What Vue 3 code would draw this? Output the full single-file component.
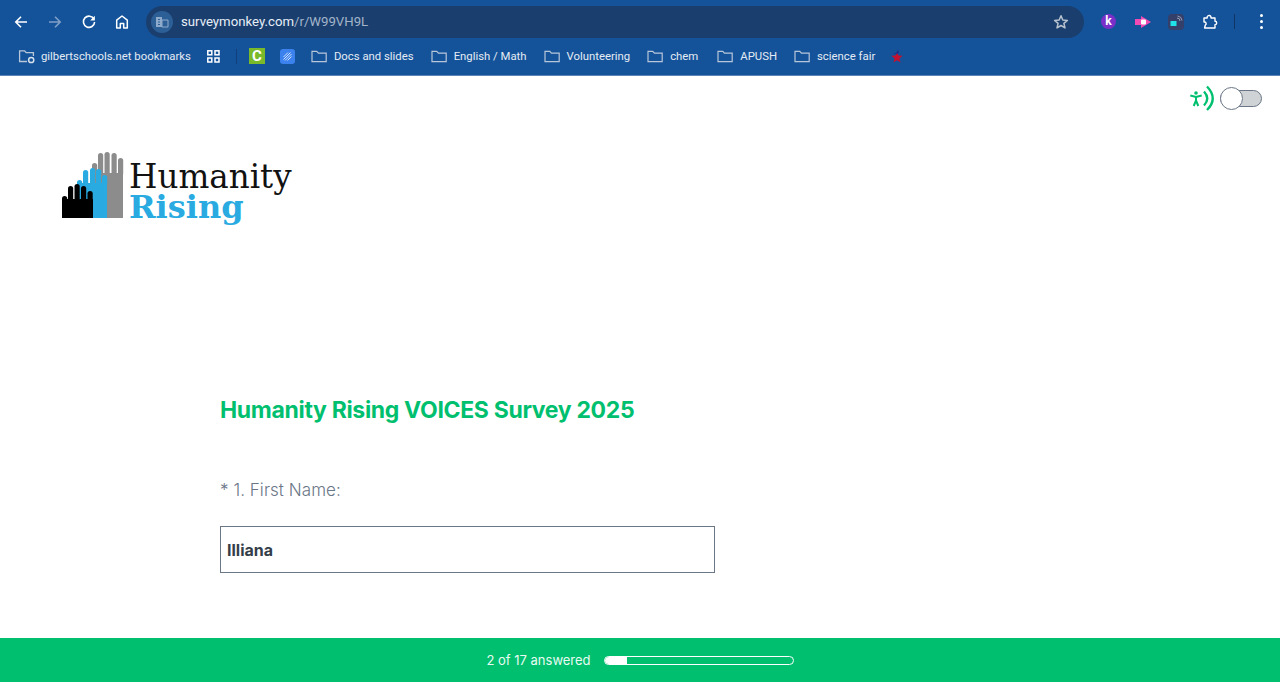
<script setup>
const folders = [
  { label: 'Docs and slides', gap: 17 },
  { label: 'English / Math', gap: 17 },
  { label: 'Volunteering', gap: 17 },
  { label: 'chem', gap: 19 },
  { label: 'APUSH', gap: 17 },
  { label: 'science fair', gap: 15 }
]
const fingers = [
  { color: '#8c8c8c', top: 22, body: [30, 31], items: [[30, 12], [36, 2], [42.5, 1], [49.5, 2], [56, 7]] },
  { color: '#29abe2', top: 32, body: [15, 30], items: [[15, 29], [21, 19], [28, 17], [34, 18], [40, 24]] },
  { color: '#000', top: 48, body: [0, 31], items: [[0, 45], [6, 35], [12.5, 33], [19, 35], [25.5, 40]] }
]
</script>

<template>
  <div class="page">
    <header class="chrome">
      <div class="toolbar">
        <svg class="nav first" width="16" height="16" viewBox="0 0 16 16"><path d="M14 8H3M8 2.8 2.8 8 8 13.2" fill="none" stroke="#fff" stroke-width="1.6"/></svg>
        <svg class="nav dim" width="16" height="16" viewBox="0 0 16 16"><path d="M2 8h11M8 2.8 13.2 8 8 13.2" fill="none" stroke="#7f9fc6" stroke-width="1.6"/></svg>
        <svg class="nav" width="16" height="16" viewBox="0 0 16 16"><path d="M13 5.2A5.6 5.6 0 1 0 13.6 8" fill="none" stroke="#fff" stroke-width="1.6"/><path d="M13.8 1.8v4.6H9.2z" fill="#fff"/></svg>
        <svg class="nav home" width="16" height="16" viewBox="0 0 16 16"><path d="M8 2 2.7 6.2V14h3.6V9.6h3.4V14h3.6V6.2z" fill="none" stroke="#fff" stroke-width="1.5" stroke-linejoin="round"/></svg>
        <div class="omnibox">
          <span class="site-chip">
            <svg width="14" height="12" viewBox="0 0 14 12"><path d="M1 1h6v10H1z" fill="#8fabcb"/><path d="M7 4h6v7H7z" fill="none" stroke="#8fabcb" stroke-width="1"/><path d="M3 3.5h2M3 6h2M3 8.5h2M9.5 7h1.5" stroke="#2d5f97" stroke-width="1"/></svg>
          </span>
          <span class="url">surveymonkey.com<span class="url-dim">/r/W99VH9L</span></span>
          <svg class="star" width="16" height="16" viewBox="0 0 16 16"><path d="M8 1.8 9.8 6l4.6.4-3.5 3 1.1 4.5L8 11.5l-4 2.4 1.1-4.5-3.5-3L6.2 6z" fill="none" stroke="#b9c3d0" stroke-width="1.5" stroke-linejoin="round"/></svg>
        </div>
        <span class="ext ext-k">k</span>
        <svg class="ext-svg pink" width="18" height="14" viewBox="0 0 18 14"><path d="M1 4h6V1l10 6-10 6v-3H1z" fill="#f04bb4"/><rect x="7" y="4.5" width="5" height="5" rx="1" fill="#fff"/></svg>
        <span class="ext-cast">
          <svg width="16" height="16" viewBox="0 0 16 16"><rect x="2.5" y="7" width="6" height="5" fill="#20e0e8"/><path d="M9 4a3 3 0 0 1 3 3M9.5 2a5 5 0 0 1 4.500 4.500" fill="none" stroke="#98a0b8" stroke-width="1"/></svg>
        </span>
        <svg class="ext-svg puzzle" width="16" height="16" viewBox="0 0 16 16"><path d="M2 4h3.200a2 2 0 0 1 3.600-1.600L9 4h4v3.200a1.600 1.600 0 0 1 0 3.400V14H2.600l.7-3a1.600 1.600 0 0 0-.6-3L2 8z" fill="none" stroke="#fff" stroke-width="1.4" stroke-linejoin="round"/></svg>
        <span class="divider"></span>
        <span class="dots"><i></i><i></i><i></i></span>
      </div>
      <nav class="bookmarks">
        <svg class="managed" width="18" height="15" viewBox="0 0 18 15"><path d="M9 12.5H1.600V1.800h5l1.600 1.900h7.200V7" fill="none" stroke="#b7c6d9" stroke-width="1.3"/><circle cx="13.2" cy="11" r="2.6" fill="none" stroke="#d7e0ea" stroke-width="1.5"/></svg>
        <span class="mark-text">gilbertschools.net bookmarks</span>
        <svg class="apps" width="13" height="13" viewBox="0 0 13 13"><g fill="none" stroke="#fff" stroke-width="1.5"><rect x=".8" y=".8" width="4" height="4"/><rect x="8" y=".8" width="4" height="4"/><rect x=".8" y="8" width="4" height="4"/><rect x="8" y="8" width="4" height="4"/></g></svg>
        <span class="bar-sep"></span>
        <span class="fav-c">C</span>
        <svg class="fav-s" width="15" height="15" viewBox="0 0 15 15"><rect width="15" height="15" rx="3" fill="#3b82ee"/><path d="M3.5 8 8 3.500M3.500 10.500 10.500 3.500M5 11.500l6.500-6.500M7.500 11.500l4-4" stroke="#cfe0fb" stroke-width="1"/></svg>
        <template v-for="f in folders" :key="f.label">
          <svg class="folder" width="16" height="13" viewBox="0 0 16 13"><path d="M1 11.7V1.300h4.800l1.600 1.800h7.800v8.600z" fill="none" stroke="#b7c6d9" stroke-width="1.2"/></svg>
          <span class="mark-text" :style="{ marginRight: f.gap + 'px' }">{{ f.label }}</span>
        </template>
        <svg class="fav-star" width="14" height="15" viewBox="0 0 14 15"><path d="M7 3l1.500 3.600 4.200.2-3.300 2.600 1.200 4L7 11.300 3.400 13.400l1.200-4L1.300 6.800l4.200-.2z" fill="#c3122f"/><path d="M3 4h3.400L8 .8l.8 3.200-2.500 1z" fill="#1b2a86"/></svg>
      </nav>
    </header>

    <main class="content">
      <div class="a11y">
        <svg width="26" height="26" viewBox="0 0 26 26"><circle cx="7" cy="8" r="1.8" fill="#00bf6f"/><path d="M1.300 10.500 7 12l5.700-1.500M7 12v3.500M7 15.500 4.700 21M7 15.500 9.300 21" fill="none" stroke="#00bf6f" stroke-width="2"/><path d="M15 6.500Q21.500 13.500 15 20.500M18 1.500Q29.500 13.500 18 25" fill="none" stroke="#00bf6f" stroke-width="2.3"/></svg>
        <span class="toggle"><i></i></span>
      </div>

      <div class="logo">
        <svg width="62" height="68" viewBox="0 0 62 68">
          <g v-for="g in fingers" :key="g.color" :fill="g.color">
            <rect :x="g.body[0]" :y="g.top" :width="g.body[1]" :height="67 - g.top"/>
            <rect v-for="it in g.items" :key="it[0]" :x="it[0]" :y="it[1]" width="5.2" :height="g.top - it[1] + 3" rx="2.6"/>
          </g>
        </svg>
        <div class="logo-text">
          <span class="logo-top">Humanity</span>
          <span class="logo-bottom">Rising</span>
        </div>
      </div>

      <section class="survey">
        <h1>Humanity Rising VOICES Survey 2025</h1>
        <label for="first-name">* 1. First Name:</label>
        <input id="first-name" type="text" value="Illiana" />
      </section>
    </main>

    <footer class="progress">
      <span>2 of 17 answered</span>
      <div class="track"><div class="fill" :style="{ width: (2 / 17 * 100) + '%' }"></div></div>
    </footer>
  </div>
</template>

<style>
html, body { margin: 0; height: 100%; overflow: hidden; background: #fff; }
</style>

<style scoped>
.page { width: 1280px; height: 682px; display: flex; flex-direction: column; font-family: Inter, "Noto Sans", sans-serif; }
.chrome { background: #14539a; height: 76px; box-sizing: border-box; border-bottom: 1px solid #5d86b8; flex: none; }
.toolbar { height: 38px; display: flex; align-items: center; box-sizing: border-box; padding-top: 5px; }
.nav { margin-right: 18px; flex: none; }
.first { margin-left: 13px; }
.home { margin-left: -1px; }
.omnibox { width: 938px; height: 32px; margin-left: -2px; border-radius: 16px; background: #1a3f6f; display: flex; align-items: center; flex: none; }
.site-chip { width: 22px; height: 22px; margin-left: 5px; border-radius: 50%; background: #2d5f97; display: flex; align-items: center; justify-content: center; }
.url { margin-left: 8px; font: 13.2px Roboto, sans-serif; color: #e8eef6; }
.url-dim { color: #a3b4c9; }
.star { margin-left: auto; margin-right: 15px; }
.ext { margin-left: 17px; width: 15px; height: 15px; border-radius: 50%; background: #7b2fc9; color: #fff; font: bold 12px/15px Roboto, sans-serif; text-align: center; flex: none; }
.ext-svg { margin-left: 16px; flex: none; }
.pink { margin-left: 18px; }
.ext-cast { margin-left: 16px; width: 16px; height: 16px; border-radius: 4px; background: #35406a; flex: none; display: flex; }
.puzzle { margin-left: 18px; }
.divider { width: 1px; height: 15px; background: #0f3565; margin-left: 16px; flex: none; }
.dots { margin-left: 25px; display: flex; flex-direction: column; gap: 3px; }
.dots i { width: 3px; height: 3px; border-radius: 50%; background: #fff; }
.bookmarks { height: 36px; display: flex; align-items: center; }
.managed { margin-left: 18px; margin-right: 5px; flex: none; }
.mark-text { font: 11.33px Roboto, sans-serif; color: #e4ebf4; white-space: nowrap; }
.apps { margin-left: 16px; flex: none; }
.bar-sep { width: 1px; height: 15px; background: #0f3f7c; margin-left: 16px; flex: none; }
.fav-c { margin-left: 12px; width: 16px; height: 16px; background: #7ab929; color: #fff; font: bold 15px/16px Roboto, sans-serif; text-align: center; flex: none; }
.fav-s { margin-left: 15px; margin-right: 16px; flex: none; }
.folder { margin-right: 7px; flex: none; }
.fav-star { flex: none; }

.content { flex: 1; min-height: 0; display: flex; flex-direction: column; position: relative; }
.a11y { position: absolute; top: 9px; left: 1189px; display: flex; align-items: center; gap: 5px; }
.toggle { width: 42px; height: 17px; border: 1px solid #6b7787; border-radius: 10px; background: #d0d3d6; position: relative; box-sizing: border-box; }
.toggle i { position: absolute; left: -1px; top: -4px; width: 23px; height: 23px; box-sizing: border-box; border: 1.5px solid #6b7787; border-radius: 50%; background: #fff; }
.logo { display: flex; margin: 75px 0 0 62px; height: 75px; gap: 5px; }
.logo-text { display: flex; flex-direction: column; margin-top: 11px; }
.logo-top { font: 32.6px/30px "DejaVu Serif", serif; color: #111; }
.logo-bottom { font: bold 32px/31px "DejaVu Serif", serif; color: #29abe2; }
.survey { margin: 168px 0 0 220px; display: flex; flex-direction: column; align-items: flex-start; }
h1 { margin: 0; font: 700 23px/32px Inter, sans-serif; color: #00bf6f; letter-spacing: -.33px; }
label { margin-top: 52px; font: 300 17px/24px Inter, sans-serif; color: #6b7787; letter-spacing: .05px; }
input { margin-top: 24px; width: 495px; height: 47px; box-sizing: border-box; border: 1px solid #6b7787; border-radius: 0; padding: 0 6px; font: 700 16px Inter, sans-serif; color: #333e48; outline: none; }
.progress { height: 44px; flex: none; background: #00bf6f; display: flex; align-items: center; justify-content: center; gap: 13px; color: #fff; font: 400 13px Inter, sans-serif; }
.progress span { color: #e8fbf2; }
.track { width: 188px; height: 7px; border: 1px solid #fff; border-radius: 5px; overflow: hidden; }
.fill { height: 100%; background: #fff; border-radius: 5px 0 0 5px; }
</style>
